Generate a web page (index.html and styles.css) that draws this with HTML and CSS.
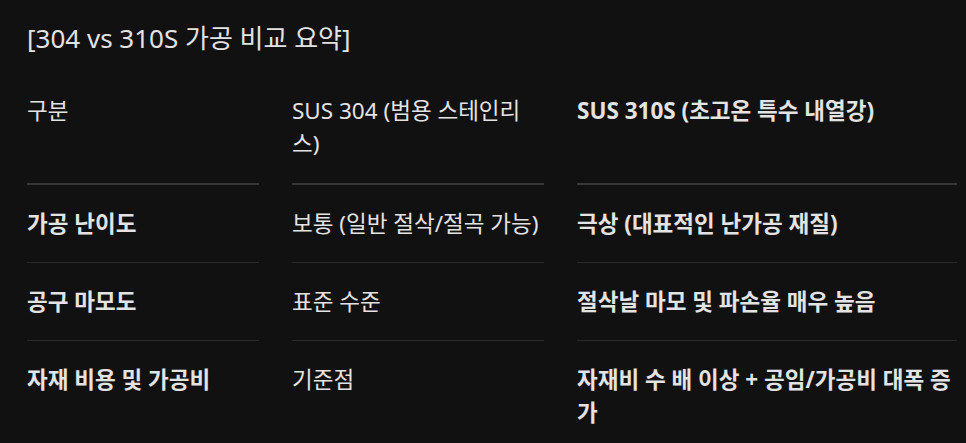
FILE: index.html
```html
<!DOCTYPE html>
<html lang="ko">
<head>
<meta charset="utf-8">
<link rel="stylesheet" href="styles.css">
</head>
<body>
<main class="page">
  <h3 class="title">[304 vs 310S 가공 비교 요약]</h3>
  <div class="table">
    <div class="cell head">구분</div>
    <div class="cell head">SUS 304 (범용 스테인리스)</div>
    <div class="cell head strong">SUS 310S (초고온 특수 내열강)</div>

    <div class="cell strong">가공 난이도</div>
    <div class="cell">보통 (일반 절삭/절곡 가능)</div>
    <div class="cell strong">극상 (대표적인 난가공 재질)</div>

    <div class="cell strong">공구 마모도</div>
    <div class="cell">표준 수준</div>
    <div class="cell strong">절삭날 마모 및 파손율 매우 높음</div>

    <div class="cell strong last">자재 비용 및 가공비</div>
    <div class="cell last">기준점</div>
    <div class="cell strong last">자재비 수 배 이상 + 공임/가공비 대폭 증가</div>
  </div>
</main>
</body>
</html>
```

FILE: styles.css
```css
html, body {
  margin: 0;
  padding: 0;
  background: #111111;
}

body {
  color: #e3e3e3;
  font-family: "Noto Sans", "Noto Sans CJK KR", sans-serif;
  font-size: 22.5px;
  line-height: 33px;
}

.page {
  padding: 20px 9px 0 27px;
}

.title {
  margin: 0 0 16px 0;
  font-size: 26px;
  line-height: 36px;
  font-weight: 400;
}

.table {
  display: grid;
  grid-template-columns: 232px 252px 380px;
  column-gap: 33px;
}

.cell {
  padding: 22px 0;
  border-bottom: 1px solid #2a2a2a;
  font-weight: 400;
}

.cell.head {
  padding-top: 22px;
  padding-bottom: 23px;
  border-bottom: 2px solid #373737;
}

.cell.strong {
  font-weight: 700;
}

.cell.last {
  border-bottom: none;
}
```
